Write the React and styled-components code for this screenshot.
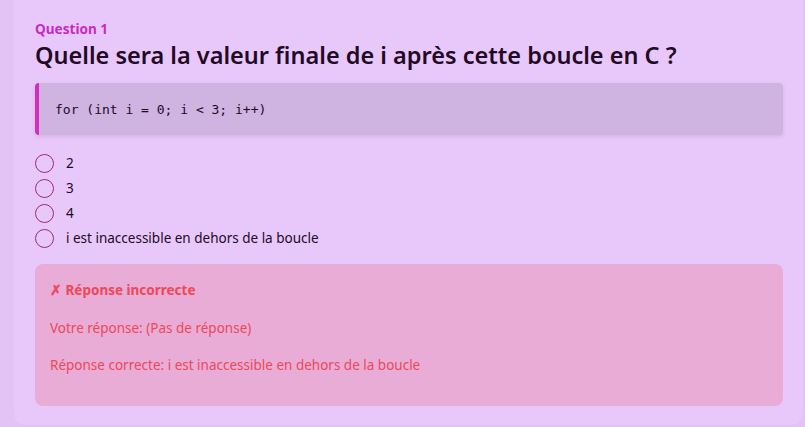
import React from "react";
import styled, { createGlobalStyle } from "styled-components";

const Global = createGlobalStyle`
  html, body { margin: 0; padding: 0; background: #e3c3f6; }
  body { font-family: "Noto Sans", "Open Sans", sans-serif; }
  * { box-sizing: border-box; }
`;

const Page = styled.div`
  padding: 0 2px 3px 14px;
`;

const Card = styled.section`
  background: #e8c8fa;
  border-radius: 0 0 12px 12px;
  padding: 19px 20px 19px 21px;
`;

const Label = styled.div`
  color: #c62bc4;
  font-size: 13.6px;
  font-weight: 700;
  line-height: 20px;
`;

const Title = styled.h2`
  margin: 0 0 12px;
  color: #220a24;
  font-size: 23.5px;
  font-weight: 600;
  line-height: 32px;
`;

const Code = styled.pre`
  margin: 0 0 19px;
  background: #cfb3e0;
  border-left: 4px solid #cf2fbc;
  border-radius: 4px;
  box-shadow: 0 2px 4px rgba(90, 40, 110, 0.12);
  padding: 0 16px;
  height: 52px;
  display: flex;
  align-items: center;
  font-family: "DejaVu Sans Mono", "Liberation Mono", monospace;
  font-size: 13px;
  color: #1c0a1e;
`;

const Options = styled.div`
  display: flex;
  flex-direction: column;
  gap: 6px;
  margin-bottom: 16px;
`;

const Option = styled.label`
  display: flex;
  align-items: center;
  gap: 12px;
  font-size: 13.5px;
  color: #220a24;
  line-height: 19px;
`;

const Radio = styled.span`
  width: 19px;
  height: 19px;
  border-radius: 50%;
  border: 1.5px solid #9a2c72;
  flex: none;
`;

const Feedback = styled.div`
  background: #e8acd6;
  border-radius: 8px;
  padding: 17px 15px 32px;
  color: #ee4858;
  font-size: 13.5px;
  line-height: 18px;
`;

const FeedbackTitle = styled.div`
  font-weight: 700;
  margin-bottom: 20px;
`;

const Line = styled.p`
  margin: 0 0 19px;
  &:last-child { margin-bottom: 0; }
`;

export default function App() {
  const options = ["2", "3", "4", "i est inaccessible en dehors de la boucle"];
  return (
    <Page>
      <Global />
      <Card>
        <Label>Question 1</Label>
        <Title>Quelle sera la valeur finale de i après cette boucle en C ?</Title>
        <Code>for (int i = 0; i &lt; 3; i++)</Code>
        <Options>
          {options.map((o) => (
            <Option key={o}>
              <Radio />
              {o}
            </Option>
          ))}
        </Options>
        <Feedback>
          <FeedbackTitle>✗ Réponse incorrecte</FeedbackTitle>
          <Line>Votre réponse: (Pas de réponse)</Line>
          <Line>Réponse correcte: i est inaccessible en dehors de la boucle</Line>
        </Feedback>
      </Card>
    </Page>
  );
}
